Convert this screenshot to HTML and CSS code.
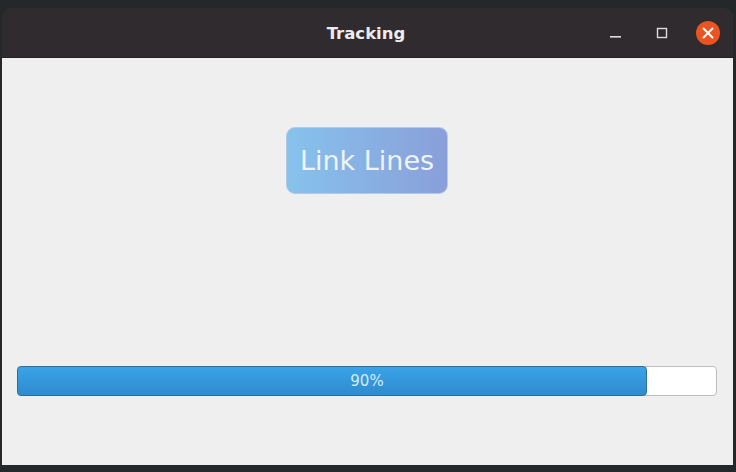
FILE: index.html
```html
<!DOCTYPE html>
<html>
<head>
<meta charset="utf-8">
<link rel="stylesheet" href="styles.css">
</head>
<body>
<div class="window">
  <div class="titlebar">
    <div class="title">Tracking</div>
    <div class="controls">
      <span class="ctl min"><svg width="12" height="12" viewBox="0 0 12 12"><rect x="0" y="8" width="11" height="1.6" fill="#dcdcdc"/></svg></span>
      <span class="ctl max"><svg width="12" height="12" viewBox="0 0 12 12"><rect x="1.5" y="1.5" width="9" height="9" fill="none" stroke="#dcdcdc" stroke-width="1.4"/></svg></span>
      <span class="ctl close"><svg width="24" height="24" viewBox="0 0 24 24"><circle cx="12" cy="12" r="12" fill="#e95420"/><path d="M7.5 7.5 L16.5 16.5 M16.5 7.5 L7.5 16.5" stroke="#fff" stroke-width="2" stroke-linecap="round"/></svg></span>
    </div>
  </div>
  <div class="content">
    <div class="link-btn">Link Lines</div>
    <div class="progress">
      <div class="fill" style="width:90%"></div>
      <div class="label">90%</div>
    </div>
  </div>
</div>
</body>
</html>
```

FILE: styles.css
```css
html, body {
  margin: 0;
  padding: 0;
  background: #25282a;
  width: 736px;
  height: 472px;
  overflow: hidden;
}
.window {
  margin: 8px 0 0 2px;
  width: 731px;
  height: 457px;
  display: flex;
  flex-direction: column;
  border-radius: 9px 9px 0 0;
  overflow: hidden;
  font-family: "DejaVu Sans", sans-serif;
}
.titlebar {
  height: 50px;
  background: #302b2e;
  position: relative;
  display: flex;
  align-items: center;
  justify-content: center;
  border-bottom: 1px solid #262224;
  box-sizing: border-box;
}
.title {
  color: #ececec;
  font-weight: bold;
  font-size: 16.5px;
  margin-right: 3px;
  margin-top: 1px;
}
.controls {
  position: absolute;
  right: 13px;
  top: 13px;
  display: flex;
  align-items: center;
  gap: 0;
}
.ctl {
  display: flex;
  align-items: center;
  justify-content: center;
}
.min { width: 12px; height: 12px; margin-right: 34px; margin-top: 2px; }
.max { width: 12px; height: 12px; margin-right: 28px; }
.close { width: 24px; height: 24px; }
.content {
  flex: 1;
  background: #efefef;
  display: flex;
  flex-direction: column;
  align-items: center;
  padding: 0 16px 0 15px;
}
.link-btn {
  margin-top: 69px;
  width: 162px;
  height: 67px;
  border-radius: 9px;
  background: linear-gradient(to right, #86c2ec, #8a9fda);
  color: #eef4fb;
  font-size: 27px;
  display: flex;
  align-items: center;
  justify-content: center;
  box-sizing: border-box;
  border: 1px solid #b4c8e8;
}
.progress {
  margin-top: 172px;
  align-self: stretch;
  height: 30px;
  background: #ffffff;
  border: 1px solid #bdbdbd;
  border-radius: 4px;
  box-sizing: border-box;
  position: relative;
}
.fill {
  position: absolute;
  left: -1px;
  top: -1px;
  bottom: -1px;
  background: linear-gradient(to bottom, #3aa3e8, #2f8bcd);
  border: 1px solid #2c6f9f;
  border-radius: 4px;
}
.label {
  position: absolute;
  inset: 0;
  display: flex;
  align-items: center;
  justify-content: center;
  color: #d6ebf8;
  font-size: 15px;
}
```
